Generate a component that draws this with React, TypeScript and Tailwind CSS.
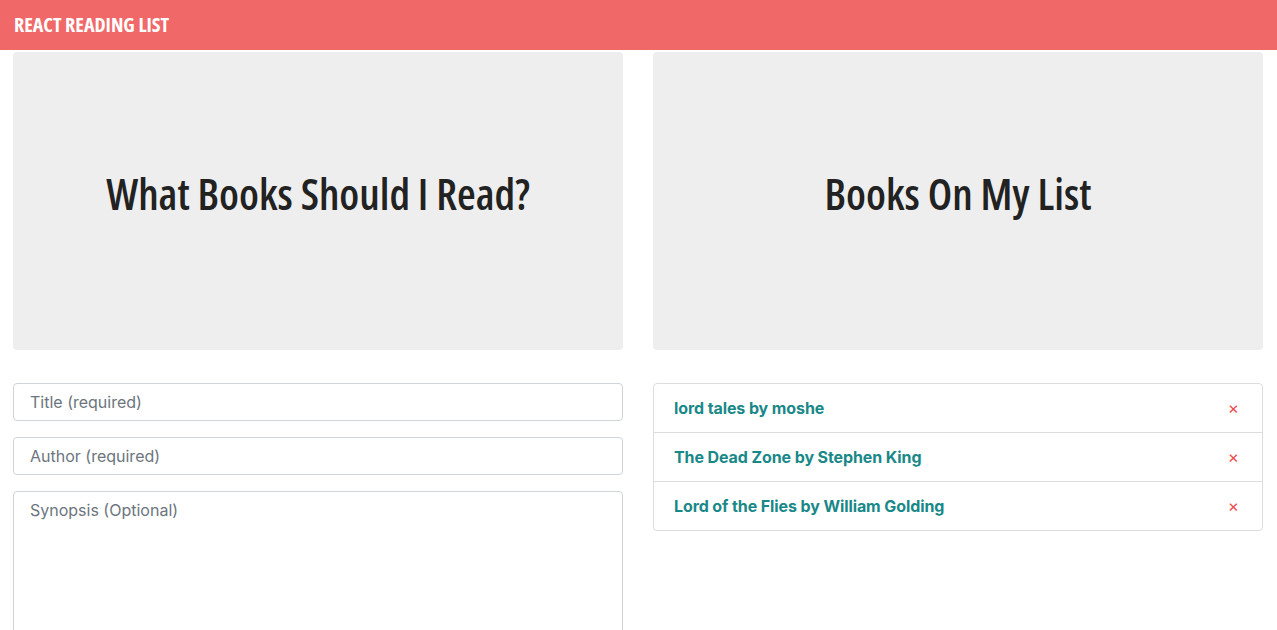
import { useState } from 'react'

const books = [
  { title: 'lord tales', author: 'moshe' },
  { title: 'The Dead Zone', author: 'Stephen King' },
  { title: 'Lord of the Flies', author: 'William Golding' },
]

export default function App() {
  const [list, setList] = useState(books)

  return (
    <div className="min-h-screen bg-white font-['Inter','Liberation_Sans',sans-serif]">
      <nav className="flex h-[50px] items-center bg-[#f06868] px-[14px]">
        <span className="font-['Open_Sans',sans-serif] text-[20px] font-bold text-white font-stretch-condensed">
          REACT READING LIST
        </span>
      </nav>

      <div className="grid grid-cols-2 gap-[30px] pl-[13px] pr-[14px]">
        <div>
          <div className="mt-[2px] flex h-[298px] items-center justify-center rounded bg-[#eeeeee] pb-[14px]">
            <h1 className="font-['Open_Sans',sans-serif] text-[43px] font-semibold text-[#222] font-stretch-condensed">
              What Books Should I Read?
            </h1>
          </div>
          <form className="mt-[33px] flex flex-col gap-4">
            <input
              placeholder="Title (required)"
              className="h-[38px] rounded border border-[#ced4da] px-4 text-base text-[#495057] outline-none placeholder:text-[#6c757d]"
            />
            <input
              placeholder="Author (required)"
              className="h-[38px] rounded border border-[#ced4da] px-4 text-base text-[#495057] outline-none placeholder:text-[#6c757d]"
            />
            <textarea
              placeholder="Synopsis (Optional)"
              className="h-[150px] resize-none rounded border border-[#ced4da] px-4 py-[6px] text-base text-[#495057] outline-none placeholder:text-[#6c757d]"
            />
          </form>
        </div>

        <div>
          <div className="mt-[2px] flex h-[298px] items-center justify-center rounded bg-[#eeeeee] pb-[14px]">
            <h1 className="font-['Open_Sans',sans-serif] text-[43px] font-semibold text-[#222] font-stretch-condensed">
              Books On My List
            </h1>
          </div>
          <ul className="mt-[33px] rounded border border-[#dddddd]">
            {list.map((b, i) => (
              <li
                key={b.title}
                className={`flex items-center justify-between py-3 pl-5 pr-[23px] leading-6 ${i > 0 ? 'border-t border-[#dddddd]' : ''}`}
              >
                <span className="text-base font-bold tracking-[-0.1px] text-[#198888]">
                  {b.title} by {b.author}
                </span>
                <button
                  onClick={() => setList(list.filter(x => x.title !== b.title))}
                  className="text-[17px] leading-none text-[#ee4b4b]"
                >
                  ×
                </button>
              </li>
            ))}
          </ul>
        </div>
      </div>
    </div>
  )
}
